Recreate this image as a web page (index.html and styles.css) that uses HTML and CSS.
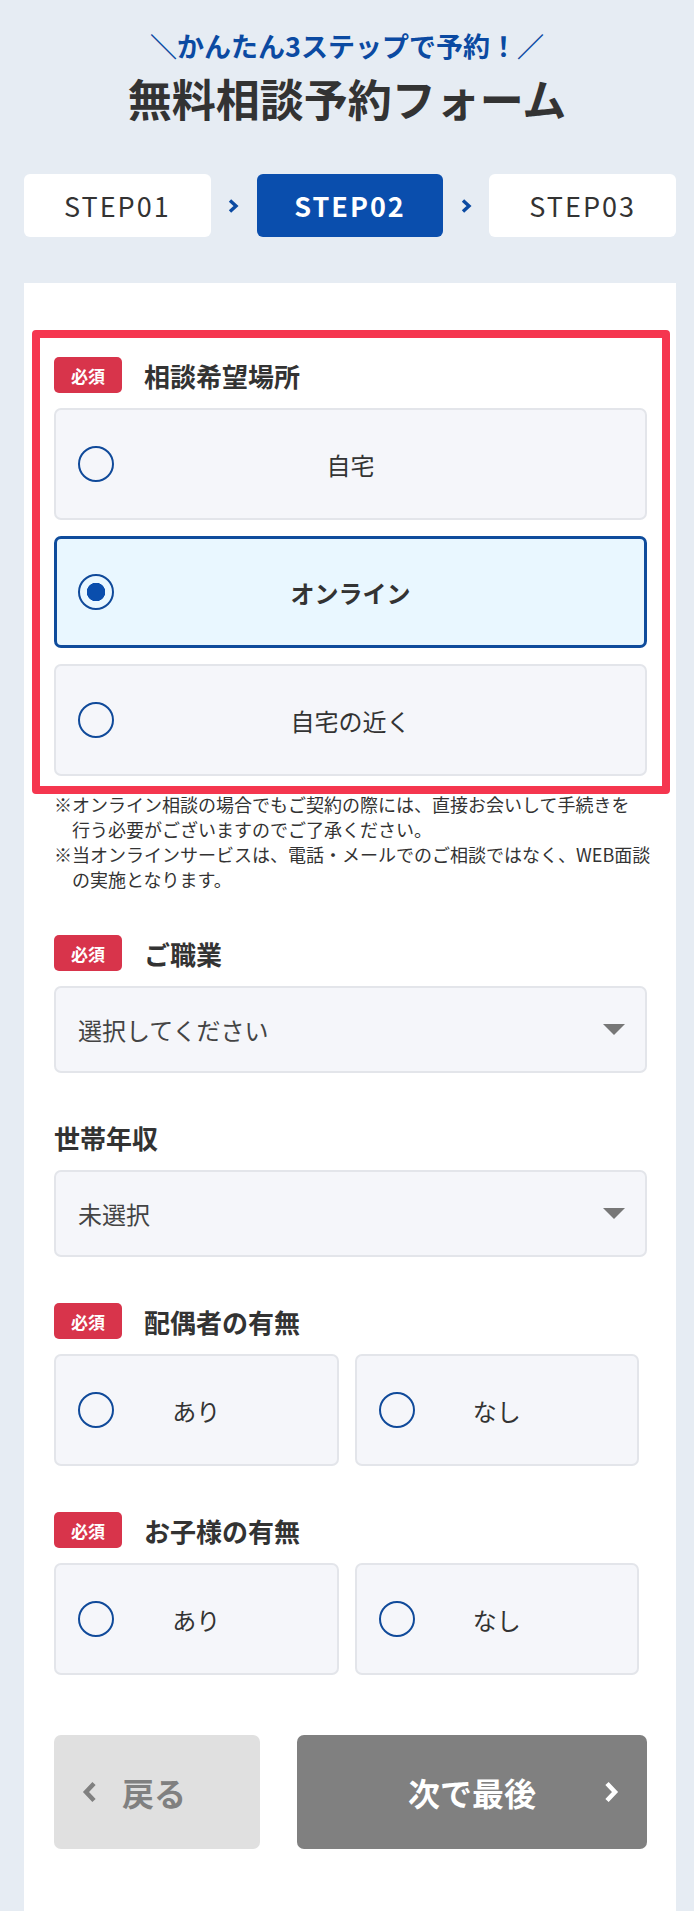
FILE: index.html
```html
<!DOCTYPE html>
<html lang="ja">
<head>
    <meta charset="UTF-8">
    <meta name="viewport" content="width=device-width, initial-scale=1.0">
    <title>無料相談予約フォーム</title>
    <link rel="stylesheet" href="styles.css">
</head>
<body>
    <header class="form-head">
        <p class="lead">＼かんたん3ステップで予約！／</p>
        <h1>無料相談予約フォーム</h1>
    </header>

    <ol class="steps">
        <li class="step">STEP01</li>
        <li class="step-arrow">
            <svg width="11" height="14" viewBox="0 0 11 14"><polyline points="2,1.5 8,7 2,12.5" fill="none" stroke="#0b4aa2" stroke-width="3.4"/></svg>
        </li>
        <li class="step is-current">STEP02</li>
        <li class="step-arrow">
            <svg width="11" height="14" viewBox="0 0 11 14"><polyline points="2,1.5 8,7 2,12.5" fill="none" stroke="#0b4aa2" stroke-width="3.4"/></svg>
        </li>
        <li class="step">STEP03</li>
    </ol>

    <main class="panel">
        <form id="reserveForm">
            <div class="field field-highlight">
                <div class="field-label"><span class="badge">必須</span>相談希望場所</div>
                <div class="choices">
                    <label class="choice">
                        <input type="radio" name="place" value="home">
                        <span class="choice-text">自宅</span>
                    </label>
                    <label class="choice is-checked">
                        <input type="radio" name="place" value="online" checked>
                        <span class="choice-text">オンライン</span>
                    </label>
                    <label class="choice">
                        <input type="radio" name="place" value="near">
                        <span class="choice-text">自宅の近く</span>
                    </label>
                </div>
            </div>

            <div class="notes">
                <p>※オンライン相談の場合でもご契約の際には、直接お会いして手続きを<br>行う必要がございますのでご了承ください。</p>
                <p>※当オンラインサービスは、電話・メールでのご相談ではなく、WEB面談<br>の実施となります。</p>
            </div>

            <div class="field">
                <div class="field-label"><span class="badge">必須</span>ご職業</div>
                <div class="select-wrap">
                    <select class="select" name="job">
                        <option>選択してください</option>
                        <option>会社員</option>
                        <option>公務員</option>
                        <option>自営業</option>
                    </select>
                </div>
            </div>

            <div class="field">
                <div class="field-label">世帯年収</div>
                <div class="select-wrap">
                    <select class="select" name="income">
                        <option>未選択</option>
                        <option>〜300万円</option>
                        <option>300〜500万円</option>
                    </select>
                </div>
            </div>

            <div class="field">
                <div class="field-label"><span class="badge">必須</span>配偶者の有無</div>
                <div class="choices choices-half">
                    <label class="choice">
                        <input type="radio" name="spouse" value="yes">
                        <span class="choice-text">あり</span>
                    </label>
                    <label class="choice">
                        <input type="radio" name="spouse" value="no">
                        <span class="choice-text">なし</span>
                    </label>
                </div>
            </div>

            <div class="field">
                <div class="field-label"><span class="badge">必須</span>お子様の有無</div>
                <div class="choices choices-half">
                    <label class="choice">
                        <input type="radio" name="child" value="yes">
                        <span class="choice-text">あり</span>
                    </label>
                    <label class="choice">
                        <input type="radio" name="child" value="no">
                        <span class="choice-text">なし</span>
                    </label>
                </div>
            </div>

            <div class="actions">
                <button type="button" class="btn btn-back">
                    <svg width="16" height="22" viewBox="0 0 16 22"><polyline points="12,2.5 4,11 12,19.5" fill="none" stroke="#808080" stroke-width="4.5"/></svg>
                    <span>戻る</span>
                </button>
                <button type="submit" class="btn btn-next">
                    <span></span>
                    <span>次で最後</span>
                    <svg width="16" height="22" viewBox="0 0 16 22"><polyline points="4,2.5 12,11 4,19.5" fill="none" stroke="#ffffff" stroke-width="4.5"/></svg>
                </button>
            </div>
        </form>
    </main>

    <script>
        document.querySelectorAll('.choice input').forEach(input => {
            input.addEventListener('change', () => {
                document.querySelectorAll(`input[name="${input.name}"]`).forEach(other => {
                    other.closest('.choice').classList.toggle('is-checked', other.checked);
                });
            });
        });
    </script>
</body>
</html>
```

FILE: styles.css
```css
body {
    background-color: #e6ecf3;
    font-family: "Noto Sans CJK JP", "Noto Sans", sans-serif;
    color: #333;
    margin: 0;
    padding: 0;
}

.form-head {
    padding-top: 28px;
    text-align: center;
}

.lead {
    margin: 0;
    font-size: 27px;
    line-height: 36px;
    font-weight: bold;
    color: #0b4aa2;
}

h1 {
    margin: 8px 0 0;
    font-size: 44px;
    line-height: 52px;
    font-weight: bold;
    color: #333;
}

/* step indicator */
.steps {
    list-style: none;
    margin: 50px 18px 0 24px;
    padding: 0;
    display: grid;
    grid-template-columns: 1fr 46px 1fr 46px 1fr;
    height: 63px;
}

.step {
    display: flex;
    align-items: center;
    justify-content: center;
    background-color: white;
    border-radius: 6px;
    font-size: 27px;
    letter-spacing: 2px;
    color: #333;
}

.step.is-current {
    background-color: #0a4ead;
    color: white;
    font-weight: bold;
}

.step-arrow {
    display: flex;
    align-items: center;
    justify-content: center;
}

.panel {
    background-color: white;
    margin: 46px 18px 0 24px;
    padding: 47px 29px 62px 30px;
}

/* fields */
.field {
    margin-bottom: 46px;
}

.field-label {
    display: flex;
    align-items: center;
    height: 36px;
    margin-bottom: 15px;
    font-size: 26px;
    font-weight: bold;
    color: #333;
}

.badge {
    display: inline-flex;
    align-items: center;
    justify-content: center;
    width: 68px;
    height: 36px;
    margin-right: 22px;
    border-radius: 5px;
    background-color: #d8344b;
    color: white;
    font-size: 17px;
}

.field-highlight {
    margin: 0 -23px 0 -22px;
    padding: 19px 15px 10px 14px;
    border: 8px solid #f5364f;
    border-radius: 4px;
}

.choices {
    display: flex;
    flex-direction: column;
    gap: 16px;
}

.choices-half {
    display: grid;
    grid-template-columns: 1fr 1fr;
    gap: 16px;
    padding-right: 8px;
}

.choice {
    display: grid;
    grid-template-columns: 36px 1fr 36px;
    align-items: center;
    height: 112px;
    box-sizing: border-box;
    padding: 0 22px;
    background-color: #f5f6fa;
    border: 2px solid #e3e5ea;
    border-radius: 7px;
    cursor: pointer;
}

.choice input {
    appearance: none;
    margin: 0;
    width: 36px;
    height: 36px;
    border: 2px solid #104a9a;
    border-radius: 50%;
    background-color: transparent;
    cursor: pointer;
}

.choice input:checked {
    background: radial-gradient(circle, #0a4ead 0 9px, transparent 9.5px);
}

.choice-text {
    text-align: center;
    font-size: 24px;
    color: #333;
}

.choice.is-checked {
    background-color: #e9f7ff;
    border: 3px solid #0f4c9c;
    padding: 0 21px;
}

.choice.is-checked .choice-text {
    font-weight: bold;
}

.notes {
    margin: -2px 0 43px;
    font-size: 18px;
    line-height: 25px;
    color: #333;
    white-space: nowrap;
}

.notes p {
    margin: 0;
    padding-left: 1em;
    text-indent: -1em;
}

/* selects */
.select-wrap {
    position: relative;
}

.select-wrap::after {
    content: "";
    position: absolute;
    right: 22px;
    top: 38px;
    border-left: 11px solid transparent;
    border-right: 11px solid transparent;
    border-top: 11px solid #777;
    pointer-events: none;
}

.select {
    appearance: none;
    display: block;
    width: 100%;
    height: 87px;
    padding: 0 60px 0 22px;
    background-color: #f5f6fa;
    border: 2px solid #e3e5ea;
    border-radius: 7px;
    font-family: inherit;
    font-size: 24px;
    color: #444;
}

/* buttons */
.actions {
    display: grid;
    grid-template-columns: 206px 1fr;
    gap: 37px;
    margin-top: 60px;
}

.btn {
    height: 114px;
    border: none;
    border-radius: 7px;
    font-family: inherit;
    font-size: 32px;
    font-weight: bold;
    cursor: pointer;
}

.btn-back {
    display: flex;
    align-items: center;
    gap: 24px;
    padding: 0 0 0 28px;
    background-color: #e0e0e0;
    color: #808080;
}

.btn-next {
    display: grid;
    grid-template-columns: 16px 1fr 16px;
    align-items: center;
    padding: 0 28px;
    background-color: #808080;
    color: white;
}
```
